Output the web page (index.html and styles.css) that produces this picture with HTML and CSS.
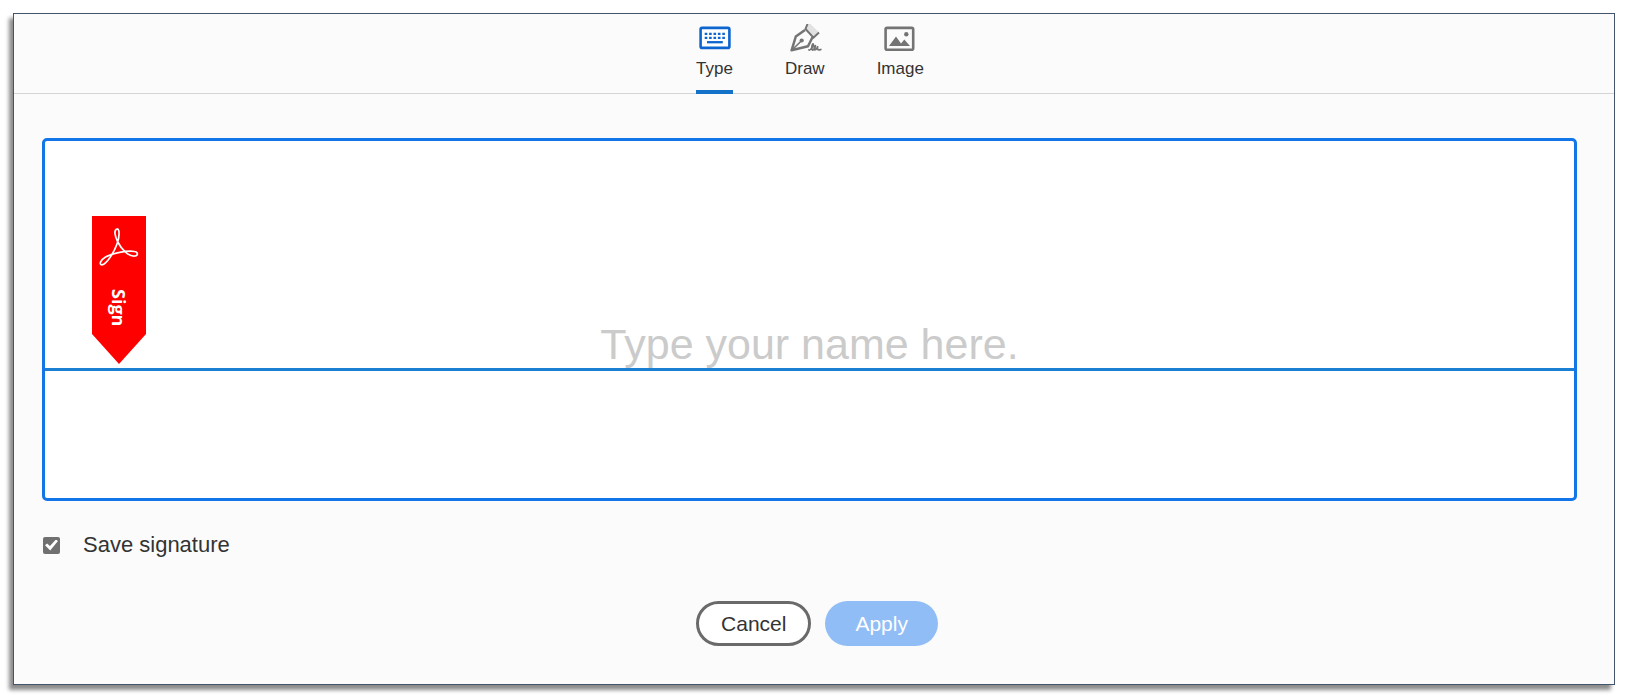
FILE: index.html
```html
<!DOCTYPE html>
<html lang="en">
<head>
<meta charset="utf-8">
<title>Signature</title>
<link rel="stylesheet" href="styles.css">
</head>
<body>
<main class="panel">
  <nav class="tabs">
    <button class="tab tab-active" type="button">
      <svg class="tab-icon" viewBox="0 0 34 28" aria-hidden="true">
        <rect x="2.6" y="3.9" width="28.800" height="20" rx="1.500" fill="#fff" stroke="#0d66d0" stroke-width="2.600"/>
        <path d="M6.700 9.800h20.200M6.700 13.900h20.200" stroke="#0d66d0" stroke-width="2.300" stroke-dasharray="2.600 1.800" fill="none"/>
        <path d="M9 18.200h15.800" stroke="#0d66d0" stroke-width="2.300"/>
      </svg>
      <span>Type</span>
    </button>
    <button class="tab" type="button">
      <svg class="tab-icon" viewBox="0 0 34 28" aria-hidden="true">
        <path d="M19.500 0h3l8.500 8.300-5.500 5.200L17.500 5z" fill="#e2e2e2"/>
        <path d="M19.500 0l-2 5 8 8.700 5.500-5.200" fill="none" stroke="#747474" stroke-width="2"/>
        <path d="M17 6L7.800 12.500 3.600 26.300 20 22.300l4.500-9" fill="none" stroke="#747474" stroke-width="2.500" stroke-linejoin="round"/>
        <path d="M4 26l9.500-9.300" stroke="#747474" stroke-width="1.600"/>
        <circle cx="13.700" cy="16.500" r="2.100" fill="#747474"/>
        <path d="M21 26c2 .5 5-5.500 4.200-6-1.200-.3-2.200 6-.5 6 1.700-.1 3.200-4.400 2.500-4.400-.9 0-1.600 4.300-.2 4.300 1.300 0 2.500-2.500 2.600-3-.5 1.600-.3 4 3.200 2.600" fill="none" stroke="#747474" stroke-width="1.800" stroke-linecap="round" stroke-linejoin="round"/>
      </svg>
      <span>Draw</span>
    </button>
    <button class="tab" type="button">
      <svg class="tab-icon" viewBox="0 0 34 28" aria-hidden="true">
        <rect x="2.600" y="3.900" width="27.600" height="21.800" rx="1.500" fill="#fbfbfb" stroke="#747474" stroke-width="2.600"/>
        <path d="M6 22l7-9.500 5 7 3.300-4L27 22z" fill="#747474"/>
        <circle cx="23.300" cy="10.300" r="2.200" fill="#747474"/>
      </svg>
      <span>Image</span>
    </button>
  </nav>
  <form class="content">
    <div class="pad">
      <div class="sign-area">
        <input class="name" type="text" placeholder="Type your name here." aria-label="Type your name here.">
        <svg class="ribbon" viewBox="0 0 54 148" role="img" aria-label="Sign">
          <path d="M0 0h54v118L27 148 0 118z" fill="#f00"/>
          <path d="M25 13C21.500 14 23 20 25.500 25.500c4 8 11.500 15.500 17.500 14.500 3.500-.5 3-4-.5-4.500C35 34 20 37.500 13.500 41c-5 3-6.500 7.500-4 7.800C14 49.300 22 36.500 25 28c2.500-6.500 3-15.500 0-15z" fill="none" stroke="#fff" stroke-width="1.700" stroke-linejoin="round"/>
          <text class="ribbon-text" transform="translate(20 73) rotate(90)">Sign</text>
        </svg>
      </div>
    </div>
    <label class="save">
      <input class="check" type="checkbox" checked>
      <span>Save signature</span>
    </label>
    <div class="actions">
      <button class="btn btn-cancel" type="button">Cancel</button>
      <button class="btn btn-apply" type="submit" disabled>Apply</button>
    </div>
  </form>
</main>
</body>
</html>
```
FILE: styles.css
```css
* {
  box-sizing: border-box;
}

body {
  margin: 0;
  padding: 13px 14px 14px 13px;
  background: #fff;
  color: #333;
  font-family: "Liberation Sans", Arial, sans-serif;
}

button,
input {
  font-family: inherit;
}

.panel {
  border: 1px solid #44546a;
  background: #fbfbfb;
  box-shadow: -4px 5px 4px #8c8c8c;
}

.tabs {
  display: flex;
  justify-content: center;
  gap: 52px;
  height: 80px;
  padding: 10px 36px 0 28px;
  border-bottom: 1px solid #d4d4d4;
}

.tab {
  display: flex;
  flex-direction: column;
  align-items: center;
  gap: 7px;
  height: 70px;
  padding: 0;
  border: 0;
  border-bottom: 4px solid transparent;
  background: none;
  color: #333;
  font-size: 17px;
  line-height: 20px;
}

.tab-active {
  border-bottom-color: #1473c8;
}

.tab-icon {
  width: 34px;
  height: 28px;
}

.content {
  padding: 44px 37px 38px 28px;
}

.pad {
  height: 363px;
  border: 3px solid #1275e8;
  border-radius: 5px;
  background: #fff;
}

.sign-area {
  display: grid;
  height: 230px;
  border-bottom: 3px solid #1b80d4;
}

.name {
  grid-area: 1 / 1;
  align-self: end;
  width: 100%;
  height: 48px;
  padding: 0;
  border: 0;
  outline: 0;
  background: none;
  font-size: 43px;
  text-align: center;
}

.name::placeholder {
  color: #cbcbcb;
  opacity: 1;
}

.ribbon {
  grid-area: 1 / 1;
  align-self: end;
  width: 54px;
  height: 148px;
  margin: 0 0 4px 47px;
}

.ribbon-text {
  fill: #fff;
  font-family: "Open Sans", "Noto Sans", sans-serif;
  font-size: 18px;
  font-weight: 700;
}

.save {
  display: flex;
  align-items: center;
  gap: 23px;
  width: max-content;
  margin-top: 31px;
  padding-left: 1px;
  font-size: 22px;
  line-height: 26px;
}

.check {
  appearance: none;
  width: 17px;
  height: 17px;
  margin: 0;
  border-radius: 2px;
  background: #707070;
  display: grid;
  place-items: center;
}

.check:checked::before {
  content: "";
  width: 13px;
  height: 11px;
  background: #fff;
  clip-path: polygon(0 52%, 16% 36%, 38% 60%, 84% 0, 100% 14%, 40% 100%);
}

.actions {
  display: flex;
  justify-content: center;
  gap: 14px;
  margin-top: 43px;
  padding-left: 15px;
}

.btn {
  height: 45px;
  border-radius: 23px;
  font-size: 21px;
  line-height: 24px;
}

.btn-cancel {
  padding: 0 22px;
  border: 3px solid #6a6a6a;
  background: #fff;
  color: #333;
}

.btn-apply {
  padding: 0 30px;
  border: 0;
  background: #90bdf5;
  color: #fff;
}
```
